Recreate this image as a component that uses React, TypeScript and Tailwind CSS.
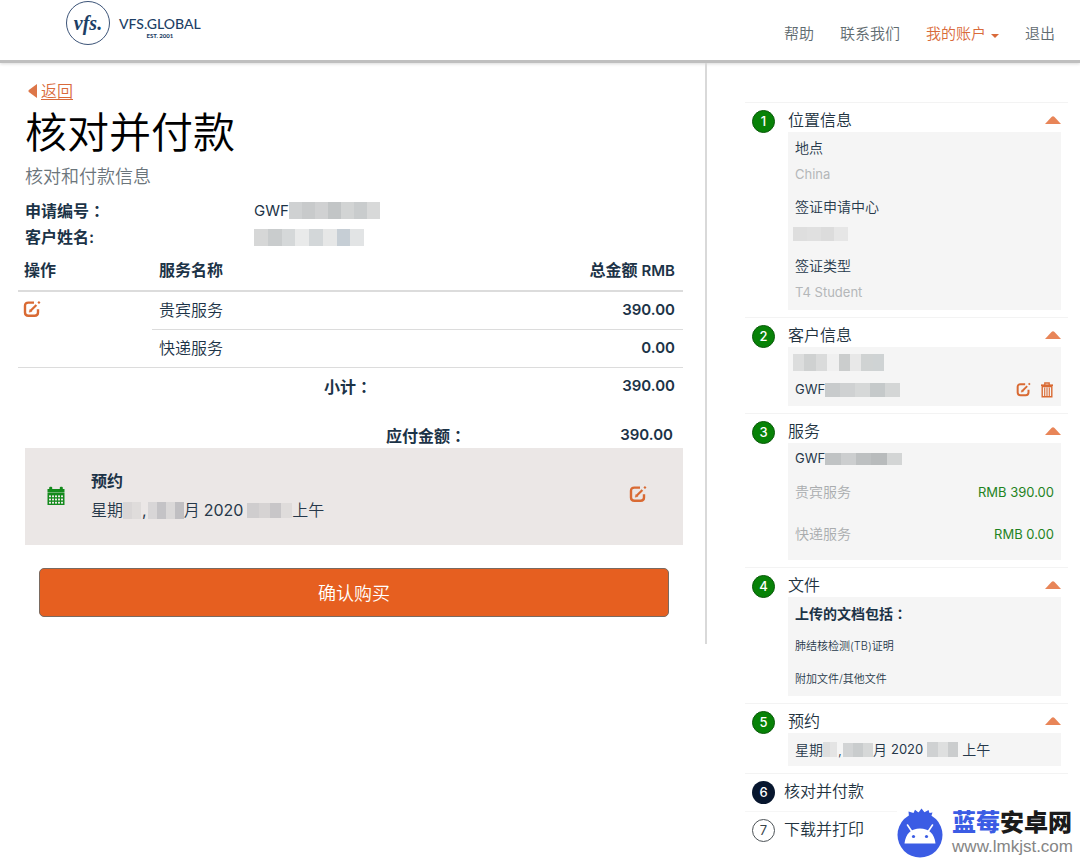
import React, { useState } from 'react';
import clsx from 'clsx';

interface IconProps {
    className?: string;
}

const EditIcon: React.FC<IconProps> = ({ className }) => (
    <svg viewBox="0 0 18 18" fill="none" stroke="currentColor" className={className} aria-hidden="true">
        <path d="M11 2.6H5.4C3.2 2.6 2 3.8 2 5.8v6.8c0 2 1.2 3.2 3.4 3.2h6.2c2.2 0 3.4-1.2 3.4-3.2V9.2" strokeWidth="2.4" />
        <path d="M7.6 10.8l5.8-5.8" strokeWidth="2.2" />
        <path d="M15.2 3.2l1.5-1.5" strokeWidth="2.2" />
        <path d="M6.2 12.2l.7-2.6 1.9 1.9z" fill="currentColor" strokeWidth="0.5" />
    </svg>
);

const TrashIcon: React.FC<IconProps> = ({ className }) => (
    <svg viewBox="0 0 14 16" fill="none" stroke="currentColor" className={className} aria-hidden="true">
        <path d="M1 3.2h12" strokeWidth="1.6" />
        <path d="M4.8 3V1h4.4v2" strokeWidth="1.3" />
        <path d="M2.2 4.6h9.6V14.8H2.2z" strokeWidth="1.4" />
        <path d="M4.7 5.5v8.5M7 5.5v8.5M9.3 5.5v8.5" strokeWidth="1.1" />
    </svg>
);

const CalendarIcon: React.FC<IconProps> = ({ className }) => (
    <svg viewBox="0 0 18 20" className={className} aria-hidden="true">
        <path d="M0.5 3h17v3.6h-17z" fill="currentColor" />
        <rect x="2.2" y="0.8" width="3" height="4" rx="1" fill="currentColor" />
        <rect x="12.8" y="0.8" width="3" height="4" rx="1" fill="currentColor" />
        <path d="M0.5 7h17v12h-17z" fill="currentColor" />
        <g fill="#ebe7e6">
            {[9.4, 12.6, 15.8].map((y) =>
                [2, 5, 8, 11, 14].map((x) => <rect key={`${x}-${y}`} x={x} y={y} width="2" height="1.8" />)
            )}
        </g>
    </svg>
);

interface MosaicProps {
    className?: string;
    cells: string[];
}

// Pixelated strip that hides personal data
const Mosaic: React.FC<MosaicProps> = ({ className, cells }) => (
    <span className={clsx('inline-flex overflow-hidden align-middle', className)}>
        {cells.map((cell, i) => (
            <span key={i} className={clsx('flex-1', cell)} />
        ))}
    </span>
);

// Full-width colon centred in its cell
const Colon = () => <span className="font-['Noto_Sans_CJK_TC',sans-serif]" lang="zh-Hant">：</span>;

interface StepProps {
    index: number;
    title: string;
    children: React.ReactNode;
}

const Step: React.FC<StepProps> = ({ index, title, children }) => {
    const [open, setOpen] = useState(true);

    return (
        <section className="flex border-t border-[#f3f3f3] pb-[7px]">
            <div className="w-[43px] shrink-0 pt-[7px] pl-[7px]">
                <span className="flex size-[23px] items-center justify-center rounded-full border border-[#0a5a0a] bg-[#078207] text-[13px] font-medium text-white">
                    {index}
                </span>
            </div>
            <div className="min-w-0 flex-1 pr-[7px]">
                <button
                    type="button"
                    onClick={() => setOpen(!open)}
                    aria-expanded={open}
                    className="flex h-[29px] w-full items-center justify-between pt-1 text-base font-[350] text-[#22333f]"
                >
                    <span>{title}</span>
                    <svg viewBox="0 0 16 8" className={clsx('h-2 w-4', !open && 'rotate-180')} aria-hidden="true">
                        <path d="M0 8L6.5 1Q8 -.4 9.5 1L16 8z" fill="#e88558" />
                    </svg>
                </button>
                {open && <div className="bg-[#f5f5f5] px-[7px] text-sm font-[350] text-[#26384a]">{children}</div>}
            </div>
        </section>
    );
};

const navLink = 'flex items-center text-[15px] font-[350] text-[#5f6b70]';

const Header = () => (
    <header className="flex h-[63px] items-start justify-between border-b-[3px] border-[#bfbfbf] pr-[25px] pl-[66px] shadow-[0_1px_3px_rgba(0,0,0,0.15)]">
        <a href="#home" className="flex items-center gap-[9px] pt-px text-[#1d3f66]">
            <span className="flex size-[44px] items-center justify-center rounded-full border border-[#3c5478]">
                <span className="font-['Liberation_Serif',serif] text-[20px] leading-none font-bold italic">vfs.</span>
            </span>
            <span className="flex flex-col items-center pt-[9px] font-['Lato',sans-serif]">
                <span className="text-[14px] leading-4 font-medium">VFS.GLOBAL</span>
                <span className="text-[6px] leading-2 font-black">EST. 2001</span>
            </span>
        </a>
        <nav className="flex gap-[26px] pt-[23px]">
            <a href="#help" className={navLink}>帮助</a>
            <a href="#contact" className={navLink}>联系我们</a>
            <button type="button" className="flex items-center gap-[5px] text-[15px] font-[350] text-[#d96a3a]">
                我的账户
                <svg viewBox="0 0 8 4" className="mt-1 h-1 w-2" aria-hidden="true">
                    <path d="M0 0h8L4 4z" fill="currentColor" />
                </svg>
            </button>
            <a href="#logout" className={navLink}>退出</a>
        </nav>
    </header>
);

const amount = 'px-2 text-right text-[15px] font-semibold';

const ServicesTable = () => (
    <table className="w-full border-collapse text-base text-[#1c3347]">
        <thead>
            <tr className="h-[41px] border-b-2 border-[#dcdcdc] text-left">
                <th className="w-[134px] px-[6px] font-semibold">操作</th>
                <th className="px-[7px] font-semibold">服务名称</th>
                <th className="px-2 text-right font-semibold">
                    总金额 <span className="text-[15px]">RMB</span>
                </th>
            </tr>
        </thead>
        <tbody>
            <tr className="h-[38px]">
                <td rowSpan={2} className="border-b border-[#dcdcdc] px-[5px] pt-2 align-top">
                    <button type="button" aria-label="编辑服务" className="block text-[#d96a33]">
                        <EditIcon className="size-[18px]" />
                    </button>
                </td>
                <td className="border-b border-[#dcdcdc] px-[7px] font-[350]">贵宾服务</td>
                <td className={clsx('border-b border-[#dcdcdc]', amount)}>390.00</td>
            </tr>
            <tr className="h-[38px] border-b border-[#dcdcdc]">
                <td className="px-[7px] font-[350]">快递服务</td>
                <td className={amount}>0.00</td>
            </tr>
            <tr className="h-[38px] font-semibold">
                <td />
                <td className="pl-[172px]">小计<Colon /></td>
                <td className={amount}>390.00</td>
            </tr>
        </tbody>
    </table>
);

const Summary = () => (
    <main className="border-r-2 border-[#d9d9d9] pt-4 pr-[22px] pb-[27px] pl-[18px]">
        <a href="#back" className="ml-[10px] flex h-6 items-center gap-1 text-base font-[350] text-[#d96a3a]">
            <svg viewBox="0 0 9 14" className="h-[14px] w-[9px]" aria-hidden="true">
                <path d="M9 0v14L.8 8Q0 7 .8 6z" fill="#dd7648" />
            </svg>
            <span className="underline underline-offset-2">返回</span>
        </a>
        <h1 className="ml-[7px] text-[42px] leading-[60px] font-[350] text-black">核对并付款</h1>
        <p className="ml-[7px] text-lg leading-[28px] font-[350] text-[#6b757b]">核对和付款信息</p>

        <dl className="mt-[6px] ml-[7px] grid grid-cols-[229px_1fr] text-base leading-[26px] text-[#1c3347]">
            <dt className="font-semibold">申请编号<Colon /></dt>
            <dd className="flex items-center text-[15px]">
                GWF
                <Mosaic
                    className="h-[17px] w-[91px]"
                    cells={['bg-[#cfd1d2]', 'bg-[#c8cacb]', 'bg-[#d0d1d2]', 'bg-[#c2c5c6]', 'bg-[#d2d4d4]', 'bg-[#c9cccd]', 'bg-[#d8d9d9]']}
                />
            </dd>
            <dt className="font-semibold">客户姓名:</dt>
            <dd className="flex items-center">
                <Mosaic
                    className="h-[17px] w-[110px]"
                    cells={['bg-[#d6d7d7]', 'bg-[#c9cccd]', 'bg-[#d5d8d9]', 'bg-[#e9eaea]', 'bg-[#d3d7d9]', 'bg-[#e6e7e7]', 'bg-[#c6ced5]', 'bg-[#e2e4e5]']}
                />
            </dd>
        </dl>

        <ServicesTable />

        <div className="mt-[18px] ml-[7px] flex h-[25px] items-center justify-between pr-[10px] pl-[361px] text-base font-semibold text-[#1c3347]">
            <span>应付金额<Colon /></span>
            <span className="text-[15px]">390.00</span>
        </div>

        <section className="ml-[7px] flex items-center bg-[#ebe7e6] pt-[19px] pr-9 pb-5 pl-[22px] text-base leading-[29px] text-[#26384a]">
            <CalendarIcon className="h-5 w-[18px] shrink-0 text-[#138a1c]" />
            <div className="ml-[26px] flex-1">
                <h2 className="font-semibold text-[#1c3347]">预约</h2>
                <p className="flex items-center font-[350]">
                    星期
                    <Mosaic className="h-[17px] w-[18px]" cells={['bg-[#d9d6d6]', 'bg-[#dfdcdb]']} />
                    <span className="px-[1px] font-normal">,</span>
                    <Mosaic className="h-[17px] w-9" cells={['bg-[#d8d6d7]', 'bg-[#c4c3c6]', 'bg-[#dad8d8]', 'bg-[#c0bfc2]']} />
                    月
                    <span className="px-1 font-normal">2020</span>
                    <Mosaic className="h-[15px] w-[45px]" cells={['bg-[#cfcdce]', 'bg-[#d6d3d3]', 'bg-[#c8c6c8]', 'bg-[#dfdcdb]']} />
                    上午
                </p>
            </div>
            <button type="button" aria-label="编辑预约" className="pb-1 text-[#d96a33]">
                <EditIcon className="size-[18px]" />
            </button>
        </section>

        <div className="mt-[23px] pr-[14px] pl-[21px]">
            <button type="button" className="h-[49px] w-full rounded-[5px] border border-[#7a6a60] bg-[#e65f20] pt-[2px] text-lg font-[350] text-white">
                确认购买
            </button>
        </div>
    </main>
);

const Progress = () => (
    <aside className="pt-[39px] pr-3 pl-[38px]">
        <Step index={1} title="位置信息">
            <dl className="pt-px pb-1 leading-[27px]">
                <dt className="pt-px">地点</dt>
                <dd className="text-[13px] font-normal text-[#b4b7b9]">China</dd>
                <dt className="pt-[5px]">签证申请中心</dt>
                <dd className="-ml-[2px] flex h-[27px] items-center">
                    <Mosaic className="h-[14px] w-[55px]" cells={['bg-[#dedede]', 'bg-[#e0e0e0]', 'bg-[#dcdcdc]', 'bg-[#e6e6e6]']} />
                </dd>
                <dt className="pt-[5px]">签证类型</dt>
                <dd className="text-[13px] font-normal text-[#b4b7b9]">T4 Student</dd>
            </dl>
        </Step>

        <Step index={2} title="客户信息">
            <div className="pt-[2px] pb-[3px] leading-[27px]">
                <div className="-ml-[2px] flex h-[27px] items-center">
                    <Mosaic
                        className="h-[17px] w-[91px]"
                        cells={['bg-[#dcdddd]', 'bg-[#cfd1d1]', 'bg-[#dadbdb]', 'bg-[#f0f0f0]', 'bg-[#cbcdcd]', 'bg-[#e8e8e8]', 'bg-[#d0d3d3]', 'bg-[#cfd3d4]']}
                    />
                </div>
                <div className="flex items-center text-[13px] font-normal">
                    GWF
                    <Mosaic className="h-[14px] w-[75px]" cells={['bg-[#c8cbcc]', 'bg-[#cfd1d2]', 'bg-[#d6d8d8]', 'bg-[#c5c9ca]', 'bg-[#d4d6d6]']} />
                    <span className="ml-auto flex items-center gap-[9px] text-[#d96a33]">
                        <button type="button" aria-label="编辑客户">
                            <EditIcon className="size-[15px]" />
                        </button>
                        <button type="button" aria-label="删除客户">
                            <TrashIcon className="h-4 w-[14px]" />
                        </button>
                    </span>
                </div>
            </div>
        </Step>

        <Step index={3} title="服务">
            <div className="pt-[3px] pb-[5px]">
                <div className="flex h-[25px] items-center text-[13px] font-normal">
                    GWF
                    <Mosaic className="h-3 w-[77px]" cells={['bg-[#c0c3c4]', 'bg-[#cccecf]', 'bg-[#bdc0c1]', 'bg-[#b8bbbc]', 'bg-[#d3d5d5]']} />
                </div>
                <div className="flex h-[42px] items-center justify-between">
                    <span className="text-[#a9acae]">贵宾服务</span>
                    <span className="text-[13px] font-normal text-[#1f831f]">RMB 390.00</span>
                </div>
                <div className="flex h-[42px] items-center justify-between">
                    <span className="text-[#a9acae]">快递服务</span>
                    <span className="text-[13px] font-normal text-[#1f831f]">RMB 0.00</span>
                </div>
            </div>
        </Step>

        <Step index={4} title="文件">
            <h3 className="leading-[33px] font-semibold text-[#1c3347]">上传的文档包括<Colon /></h3>
            <ul className="text-[11px] leading-[33px]">
                <li>肺结核检测(TB)证明</li>
                <li>附加文件/其他文件</li>
            </ul>
        </Step>

        <Step index={5} title="预约">
            <p className="flex h-[33px] items-center">
                星期
                <Mosaic className="h-[15px] w-[14px]" cells={['bg-[#dddede]', 'bg-[#e4e4e4]']} />
                <span className="px-px">,</span>
                <Mosaic className="h-[14px] w-[30px]" cells={['bg-[#d2d4d5]', 'bg-[#c9cccd]', 'bg-[#d6d8d8]']} />
                月
                <span className="px-1 text-[13px] font-normal">2020</span>
                <Mosaic className="mr-1 h-[15px] w-[31px]" cells={['bg-[#cfd1d2]', 'bg-[#dedfdf]', 'bg-[#cbcdce]']} />
                上午
            </p>
        </Step>

        <section className="flex h-[38px] border-t border-[#f3f3f3] pl-[7px]">
            <span className="mt-[7px] flex size-[23px] items-center justify-center rounded-full bg-[#07162e] text-[13px] font-medium text-white">
                6
            </span>
            <h2 className="pl-[9px] text-base leading-[35px] font-[350] text-[#22333f]">核对并付款</h2>
        </section>
        <section className="flex h-[38px] border-t border-[#f6f6f6] pl-[7px]">
            <span className="mt-[7px] flex size-[23px] items-center justify-center rounded-full border border-[#4d5357] text-[13px] text-[#3a444a]">
                7
            </span>
            <h2 className="pl-[9px] text-base leading-[35px] font-[350] text-[#22333f]">下载并打印</h2>
        </section>
    </aside>
);

const SiteBadge = () => (
    <a href="#site" className="absolute right-[7px] bottom-[3px] flex items-center gap-[9px] bg-white">
        <svg viewBox="0 0 46 50" className="h-[50px] w-[46px]" aria-hidden="true">
            <path d="M12 9L11.500 3.500l5 1.500L18 1.800 21.500 4.500 24.500.5l3 3.700L31.500 2l1 3 3-.5L34 9z" fill="#3b5ce4" />
            <circle cx="23" cy="27" r="22.500" fill="#3b5ce4" />
            <path d="M10.500 17l4 6M35.500 17l-4 6" stroke="#fff" strokeWidth="1.600" strokeLinecap="round" />
            <path d="M7.500 35.500C8.500 25.500 14.500 20.500 23 20.500S37.500 25.500 38.500 35.500z" fill="#fff" />
            <circle cx="16.500" cy="28.500" r="1.600" fill="#3b5ce4" />
            <circle cx="29.500" cy="28.500" r="1.600" fill="#3b5ce4" />
        </svg>
        <span className="flex flex-col">
            <span className="text-[24px] leading-[28px] font-black text-[#1b1b1b]">
                <span className="text-[#3b5ce4]">蓝莓</span>安卓网
            </span>
            <span className="font-['Liberation_Sans',sans-serif] text-[17px] leading-[20px] text-[#858585]">www.lmkjst.com</span>
        </span>
    </a>
);

export default function App() {
    return (
        <div className="relative min-h-screen bg-white font-['Inter','Noto_Sans_CJK_SC',sans-serif]">
            <Header />
            <div className="grid grid-cols-[707fr_373fr] items-start">
                <Summary />
                <Progress />
            </div>
            <SiteBadge />
        </div>
    );
}
